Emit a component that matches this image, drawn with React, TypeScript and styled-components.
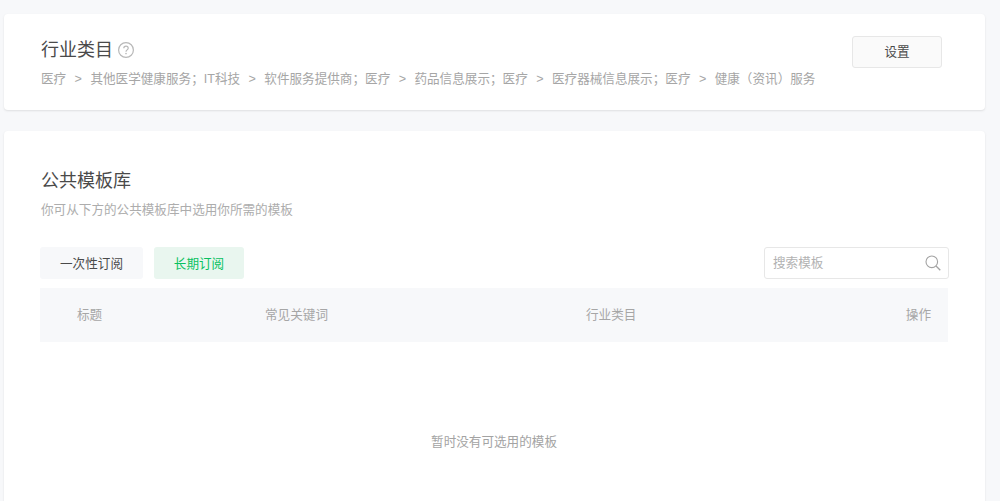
import React from "react";
import styled, { createGlobalStyle } from "styled-components";

const Global = createGlobalStyle`
  html, body { margin: 0; padding: 0; background: #f7f8fa; }
  body { font-family: "Liberation Sans", "Noto Sans CJK SC", sans-serif; }
  * { box-sizing: border-box; }
`;

const Page = styled.div`
  height: 501px;
  overflow: hidden;
  padding: 14px 15px 0 4px;
  display: flex;
  flex-direction: column;
  gap: 21px;
`;

const Card = styled.section`
  flex-shrink: 0;
  background: #fff;
  border-radius: 4px;
  box-shadow: 0 1px 2px rgba(150, 150, 150, 0.25);
`;

const IndustryCard = styled(Card)`
  height: 96px;
  padding: 22px 43px 0 37px;
  display: flex;
  justify-content: space-between;
  align-items: flex-start;
`;

const TitleRow = styled.div`
  display: flex;
  align-items: center;
  gap: 5px;
  height: 28px;
`;

const Title = styled.h2`
  margin: 0;
  font-size: 18px;
  font-weight: 400;
  line-height: 28px;
  color: #4a4a4a;
`;

const Crumbs = styled.div`
  display: flex;
  margin-top: 5px;
  font-size: 12.6px;
  line-height: 20px;
  color: #a6a6a6;
  white-space: nowrap;
`;

const Sep = styled.span`
  width: 24.2px;
  text-align: center;
  font-family: "Liberation Sans", sans-serif;
`;

const SettingsButton = styled.button`
  width: 90px;
  height: 32px;
  padding: 0 0 3px;
  background: #fafafa;
  border: 1px solid #e7e7e7;
  border-radius: 3px;
  font: inherit;
  font-size: 12.6px;
  color: #4a4a4a;
`;

const LibraryCard = styled(Card)`
  height: 500px;
  padding: 36px 37px 0 36px;
`;

const LibTitle = styled(Title)`
  margin-left: 1px;
`;

const Desc = styled.p`
  margin: 5px 0 0 1px;
  font-size: 12.6px;
  line-height: 20px;
  color: #adadad;
`;

const Toolbar = styled.div`
  display: flex;
  align-items: center;
  gap: 11px;
  margin-top: 27px;
  height: 32px;
`;

const Tab = styled.button<{ $active?: boolean; $width: number }>`
  width: ${(p) => p.$width}px;
  height: 32px;
  padding: 0 0 2px;
  border: 0;
  border-radius: 3px;
  font: inherit;
  font-size: 12.6px;
  background: ${(p) => (p.$active ? "#e9f6ef" : "#f7f8fa")};
  color: ${(p) => (p.$active ? "#07c160" : "#4a4a4a")};
`;

const Search = styled.div`
  margin-left: auto;
  margin-right: -1px;
  width: 185px;
  height: 32px;
  border: 1px solid #e7e7e7;
  border-radius: 3px;
  padding: 0 7px 0 8px;
  display: flex;
  align-items: center;
  justify-content: space-between;
  font-size: 12.6px;
  color: #b2b2b2;
`;

const SearchLabel = styled.span`
  line-height: 20px;
  margin-top: -1px;
`;

const TableHead = styled.div`
  margin-top: 9px;
  height: 54px;
  background: #f7f8fa;
  display: grid;
  grid-template-columns: 188px 321px 1fr auto;
  align-items: center;
  padding: 0 17px 4px 37px;
  font-size: 12.6px;
  color: #a6a6a6;
`;

const Empty = styled.div`
  margin-top: 90px;
  text-align: center;
  font-size: 12.6px;
  line-height: 20px;
  color: #a3a3a3;
`;

const crumbs = [
  "医疗",
  "其他医学健康服务；IT科技",
  "软件服务提供商；医疗",
  "药品信息展示；医疗",
  "医疗器械信息展示；医疗",
  "健康（资讯）服务",
];

const HelpIcon = () => (
  <svg width="16" height="16" viewBox="0 0 16 16" fill="none">
    <circle cx="8" cy="8" r="7.4" stroke="#b8b8b8" strokeWidth="1.2" />
    <path d="M5.8 6.3C5.8 5 6.8 4.2 8 4.2s2.2.8 2.2 2c0 1.7-2.2 1.7-2.2 3.5" stroke="#b8b8b8" strokeWidth="1.2" />
    <circle cx="8" cy="11.6" r="0.8" fill="#b8b8b8" />
  </svg>
);

const SearchIcon = () => (
  <svg width="16" height="16" viewBox="0 0 16 16" fill="none">
    <circle cx="6.8" cy="6.8" r="5.8" stroke="#a3a3a3" strokeWidth="1.1" />
    <path d="M11 11l4.3 4.3" stroke="#a3a3a3" strokeWidth="1.3" />
  </svg>
);

export default function App() {
  return (
    <>
      <Global />
      <Page>
        <IndustryCard>
          <div>
            <TitleRow>
              <Title>行业类目</Title>
              <HelpIcon />
            </TitleRow>
            <Crumbs>
              {crumbs.map((c, i) => (
                <React.Fragment key={c}>
                  {i > 0 && <Sep>&gt;</Sep>}
                  <span>{c}</span>
                </React.Fragment>
              ))}
            </Crumbs>
          </div>
          <SettingsButton>设置</SettingsButton>
        </IndustryCard>
        <LibraryCard>
          <LibTitle>公共模板库</LibTitle>
          <Desc>你可从下方的公共模板库中选用你所需的模板</Desc>
          <Toolbar>
            <Tab $width={103}>一次性订阅</Tab>
            <Tab $width={90} $active>长期订阅</Tab>
            <Search>
              <SearchLabel>搜索模板</SearchLabel>
              <SearchIcon />
            </Search>
          </Toolbar>
          <TableHead>
            <span>标题</span>
            <span>常见关键词</span>
            <span>行业类目</span>
            <span>操作</span>
          </TableHead>
          <Empty>暂时没有可选用的模板</Empty>
        </LibraryCard>
      </Page>
    </>
  );
}
